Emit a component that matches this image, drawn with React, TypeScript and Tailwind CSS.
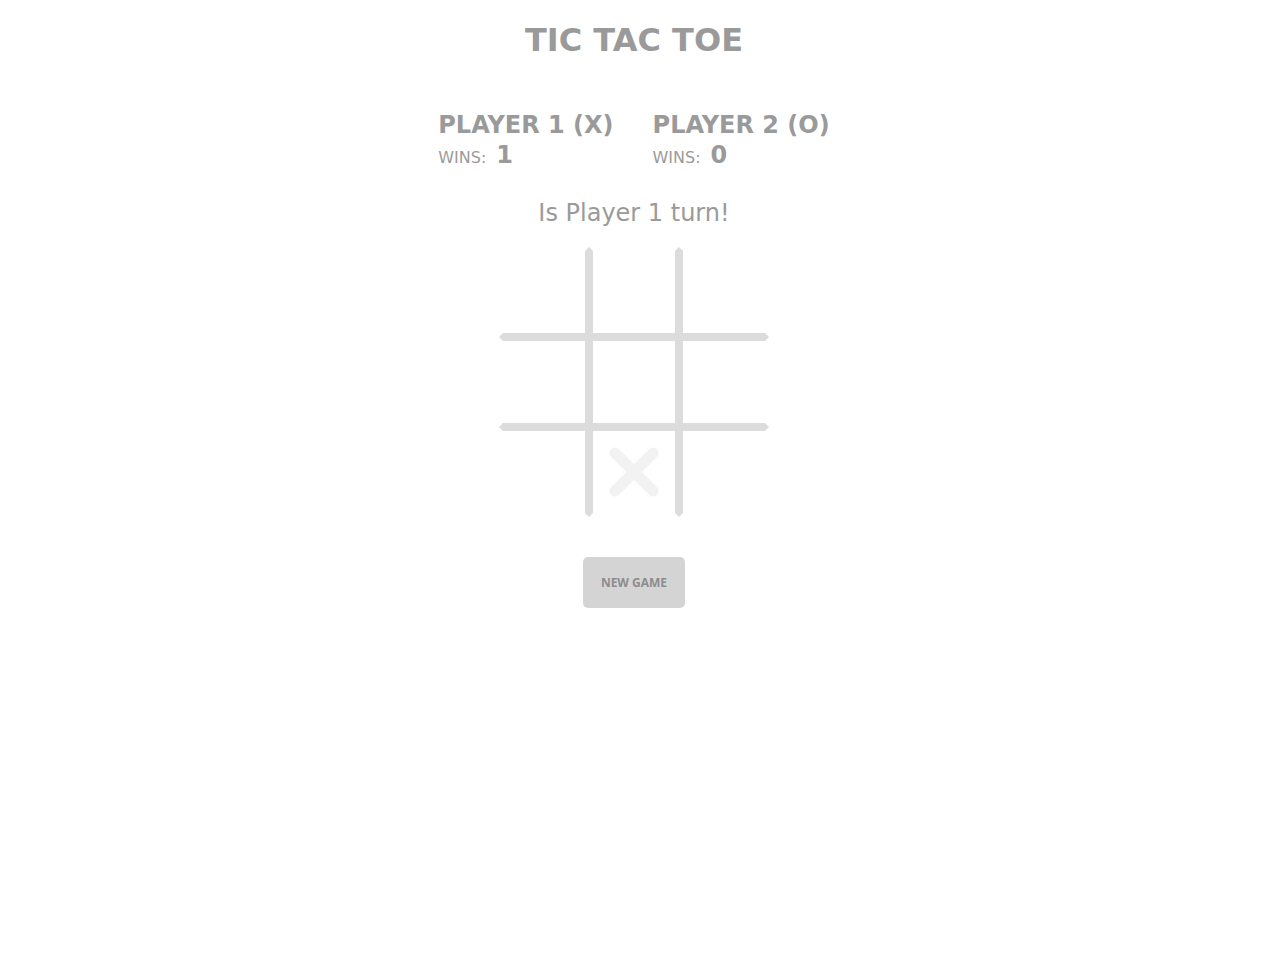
const cells = ["", "", "", "", "", "", "", "X", ""]

function Cell({ value, index }: { value: string; index: number }) {
  const row = Math.floor(index / 3)
  const col = index % 3
  const borders = [
    row === 0 ? "border-t-transparent" : "",
    row === 2 ? "border-b-transparent" : "",
    col === 0 ? "border-l-transparent" : "",
    col === 2 ? "border-r-transparent" : "",
  ].join(" ")
  return (
    <div className={`w-[90px] h-[90px] border-4 border-[#dcdcdc] flex items-center justify-center ${borders}`}>
      {value === "X" && (
        <svg width="54" height="54" viewBox="0 0 54 54">
          <path d="M8 8 L46 46 M46 8 L8 46" stroke="#f2f2f2" strokeWidth="11" strokeLinecap="round" />
        </svg>
      )}
    </div>
  )
}

export default function App() {
  return (
    <div className="w-[1268px] flex flex-col items-center text-[#9a9a9a] font-['DejaVu_Sans',sans-serif]">
      <h1 className="mt-[20px] text-[32px] leading-[40px] font-bold">TIC TAC TOE</h1>

      <div className="mt-[50px] flex gap-[39px]">
        <div className="flex flex-col">
          <span className="text-[24px] leading-[30px] font-bold">PLAYER 1 (X)</span>
          <div className="flex items-baseline gap-[10px]">
            <span className="text-[16px]">WINS:</span>
            <span className="text-[24px] leading-[30px] font-bold">1</span>
          </div>
        </div>
        <div className="flex flex-col">
          <span className="text-[24px] leading-[30px] font-bold">PLAYER 2 (O)</span>
          <div className="flex items-baseline gap-[10px]">
            <span className="text-[16px]">WINS:</span>
            <span className="text-[24px] leading-[30px] font-bold">0</span>
          </div>
        </div>
      </div>

      <p className="mt-[28px] text-[24px] leading-[30px]">Is Player 1 turn!</p>

      <div className="mt-[19px] grid grid-cols-3">
        {cells.map((v, i) => (
          <Cell key={i} value={v} index={i} />
        ))}
      </div>

      <button className="mt-[40px] w-[102px] h-[51px] rounded-[5px] bg-[#d4d4d4] text-[#8c8c8c] text-[12px] font-bold font-['Open_Sans',sans-serif]">
        NEW GAME
      </button>
    </div>
  )
}
